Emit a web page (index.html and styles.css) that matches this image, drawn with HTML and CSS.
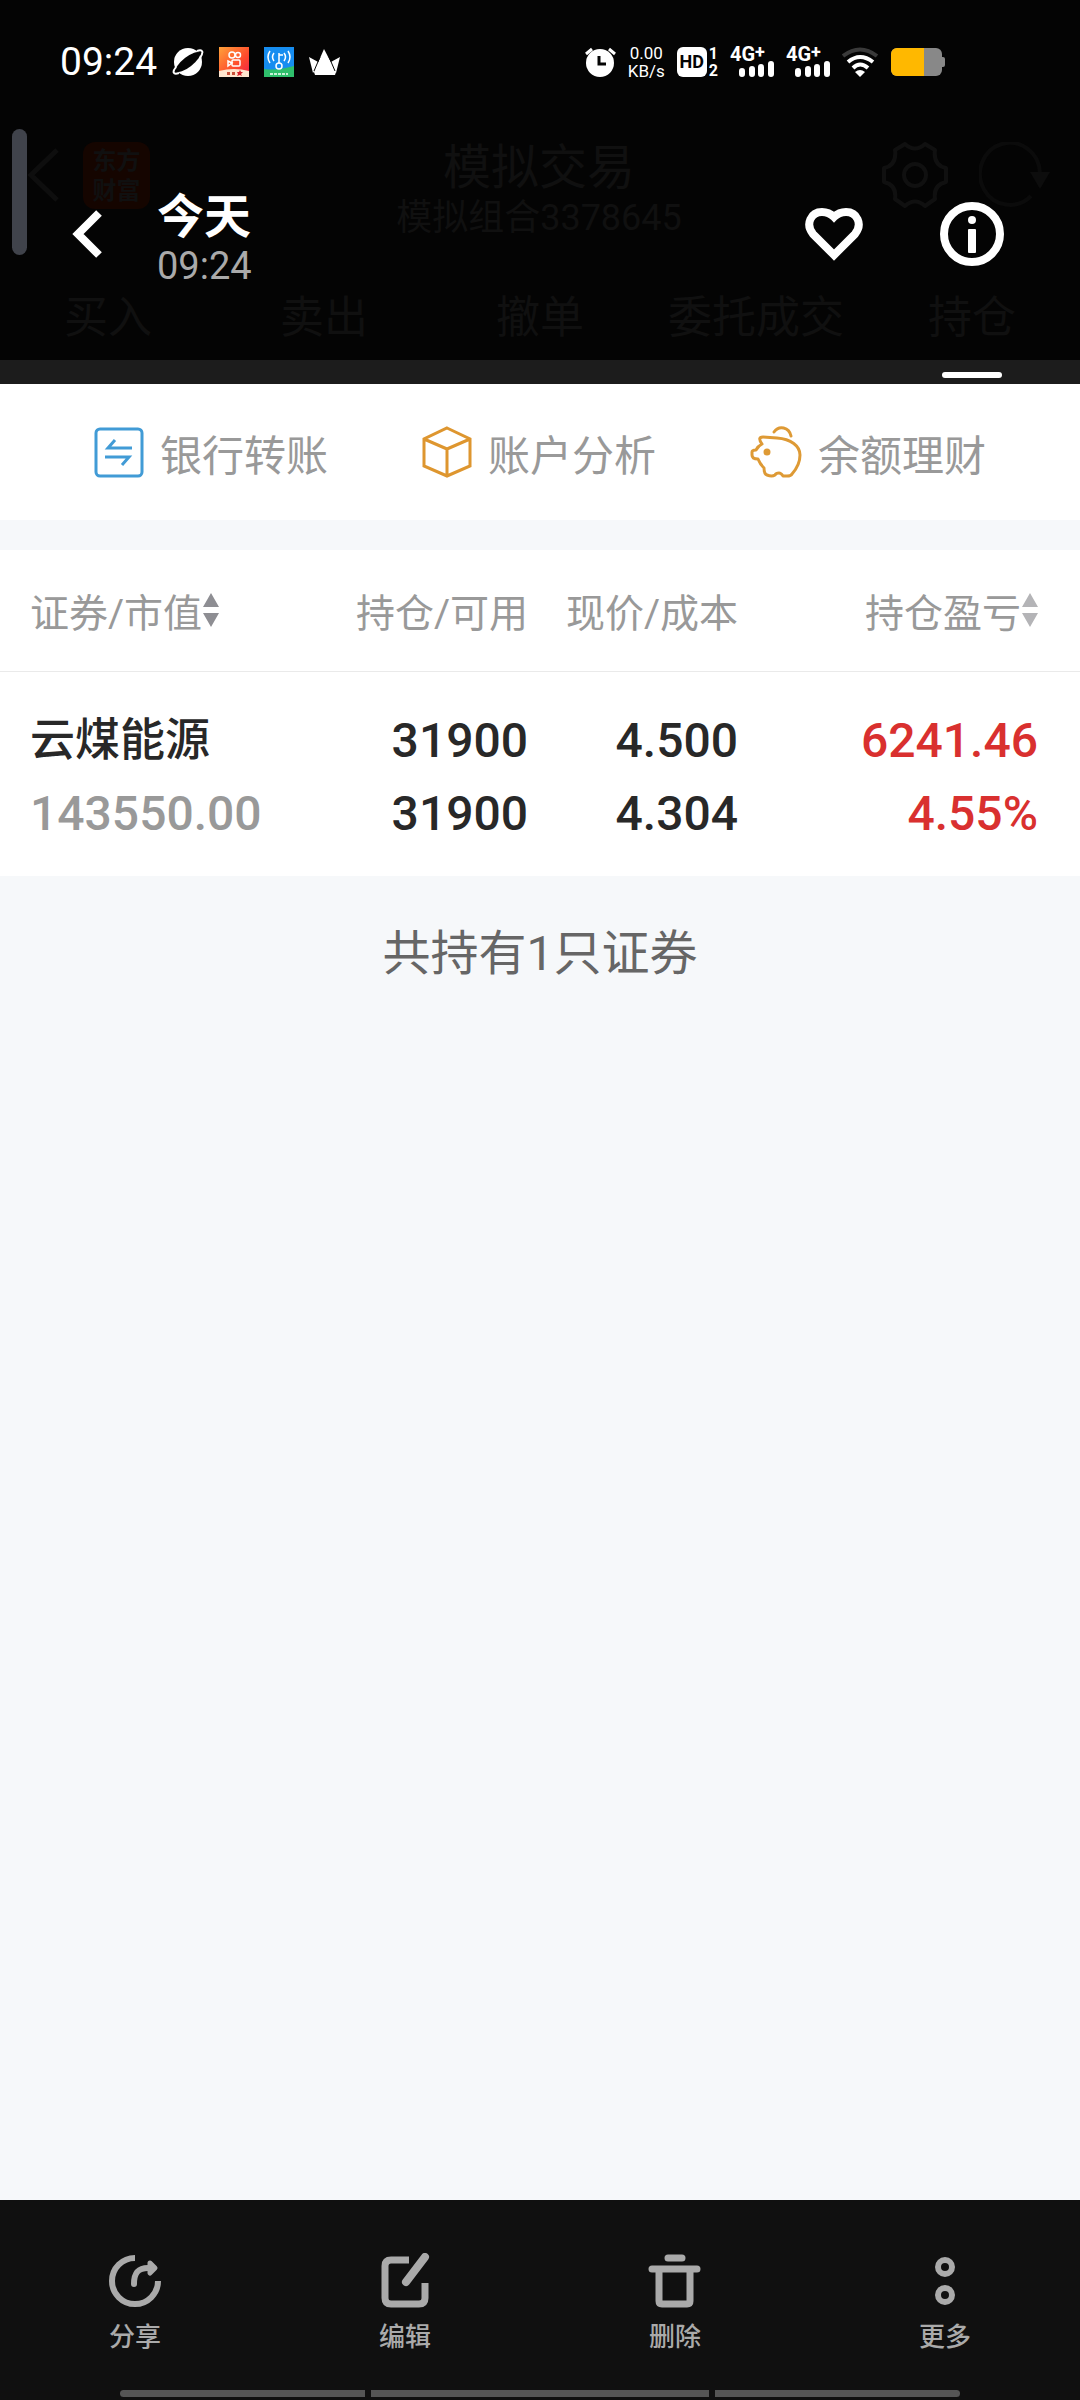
FILE: index.html
```html
<!DOCTYPE html>
<html lang="zh-CN">
<head>
    <meta charset="UTF-8">
    <meta name="viewport" content="width=device-width, initial-scale=1.0">
    <title>模拟交易 - 今天 09:24</title>
    <link rel="stylesheet" href="styles.css">
</head>

<body>
<header class="top">
    <!-- Status bar -->
    <div class="status-bar">
        <div class="status-left">
            <span class="clock">09:24</span>
            <svg width="32" height="30" viewBox="0 0 32 30">
                <circle cx="16" cy="15" r="14" fill="#fff"/>
                <ellipse cx="16" cy="15" rx="15" ry="5" transform="rotate(-38 16 15)" fill="#040404"/>
                <path d="M4 20C0 25 1 28 7 26M25 4C31 2 32 5 28 11" fill="none" stroke="#fff" stroke-width="2"/>
            </svg>
            <svg width="30" height="30" viewBox="0 0 30 30">
                <defs>
                    <linearGradient id="warm" x1="0" y1="0" x2="1" y2="1">
                        <stop offset="0" stop-color="#ffa23a"/>
                        <stop offset="0.6" stop-color="#ff4a2c"/>
                        <stop offset="1" stop-color="#f01f4a"/>
                    </linearGradient>
                </defs>
                <rect width="30" height="30" fill="url(#warm)"/>
                <path d="M0 24q15-4 30 0v6H0z" fill="#ffe6cf"/>
                <g fill="none" stroke="#fff" stroke-width="1.500">
                    <circle cx="13" cy="8" r="3"/>
                    <circle cx="19" cy="8" r="2.500"/>
                    <rect x="13" y="13" width="8" height="6" rx="1"/>
                    <path d="M13 16l-4-2v5z"/>
                </g>
                <path d="M8 25h3v3h-3zM13 25h3v3h-3z" fill="#c9523a"/>
                <path d="M21 23l1 2h2l-2 2 1 2-2-1-3 1 1-2-1-2h2z" fill="#d8202a"/>
            </svg>
            <svg width="30" height="30" viewBox="0 0 30 30">
                <rect width="30" height="30" fill="#168df0"/>
                <path d="M0 22q12 2 30-3v11H0z" fill="#2fbf6c"/>
                <g fill="none" stroke="#fff" stroke-width="1.500">
                    <path d="M6 4q-4 6 0 12M10 6q-3 4 0 8M24 4q4 6 0 12M20 6q3 4 0 8M15 6v10M15 8h4"/>
                    <circle cx="15" cy="19" r="3"/>
                </g>
                <path d="M6 27h18" stroke="#c9f2d8" stroke-width="2" stroke-dasharray="3 1"/>
            </svg>
            <svg width="31" height="26" viewBox="0 0 31 26">
                <path d="M4 24L0 8l11 6zM27 24l4-16-11 6z" fill="#fff"/>
                <path d="M15 0L5 23l1 3h20l1-3z" fill="#fff"/>
                <path d="M5 22L11 8M26 22L20 8" stroke="#040404" stroke-width="1"/>
            </svg>
        </div>
        <div class="status-right">
            <svg width="31" height="30" viewBox="0 0 31 30">
                <circle cx="15" cy="16" r="14" fill="#fff"/>
                <path d="M1 7l6-5M24 2l6 5" stroke="#fff" stroke-width="3"/>
                <path d="M14 9v8h7" fill="none" stroke="#040404" stroke-width="3"/>
            </svg>
            <div class="speed"><span>0.00</span><span>KB/s</span></div>
            <div class="volte">
                <span class="hd">HD</span>
                <span class="sims"><span>1</span><span>2</span></span>
            </div>
            <div class="signal">
                <span>4G<sup>+</sup></span>
                <svg width="35" height="16" viewBox="0 0 35 16"><path d="M3 10v3M13 8v5M22 6v7M32 3v10" stroke="#fff" stroke-width="6" stroke-linecap="round"/></svg>
            </div>
            <div class="signal">
                <span>4G<sup>+</sup></span>
                <svg width="35" height="16" viewBox="0 0 35 16"><path d="M3 10v3M13 8v5M22 6v7M32 3v10" stroke="#fff" stroke-width="6" stroke-linecap="round"/></svg>
            </div>
            <svg width="37" height="30" viewBox="0 0 37 30" fill="none" stroke="#fff" stroke-width="4">
                <path d="M1 9q17-13 34 0" stroke="#3a3a3a"/>
                <path d="M6 15q12-10 25 0M11 21q7-7 15 0"/>
                <path d="M13 25q5-4 10 0l-5 5z" fill="#fff" stroke="none"/>
            </svg>
            <svg width="54" height="28" viewBox="0 0 54 28">
                <rect x="49" y="9" width="5" height="10" rx="2" fill="#888"/>
                <rect width="51" height="28" rx="6" fill="#888"/>
                <path d="M6 0h27v28H6a6 6 0 0 1-6-6V6a6 6 0 0 1 6-6z" fill="#ffb800"/>
            </svg>
        </div>
    </div>

    <!-- Title bar of the trading app, dimmed under the viewer toolbar -->
    <div class="app-bar">
        <div class="app-left">
            <svg width="32" height="66" viewBox="0 0 32 66"><path d="M30 8L4 33l26 25" fill="none" stroke="#0e0e0e" stroke-width="5"/></svg>
            <span class="app-logo">东方<br>财富</span>
        </div>
        <div class="app-title">
            <h1>模拟交易</h1>
            <p>模拟组合3378645</p>
        </div>
        <div class="app-right">
            <svg width="66" height="66" viewBox="0 0 66 66" fill="none" stroke="#101010" stroke-width="4">
                <path d="M23 2Q33 11 43 2L53 8Q51 23 64 26V40Q51 43 53 57L43 64Q33 55 23 64L13 57Q15 43 2 40V26Q15 23 13 8Z" stroke-linejoin="round"/>
                <circle cx="33" cy="33" r="11"/>
            </svg>
            <svg width="72" height="66" viewBox="0 0 72 66">
                <path d="M52 54A30 31 0 1 1 61 31" fill="none" stroke="#0b0b0b" stroke-width="4"/>
                <path d="M51 30h20L61 47z" fill="#0d0d0d"/>
            </svg>
        </div>
    </div>
    <nav class="tabs">
        <a href="#">买入</a>
        <a href="#">卖出</a>
        <a href="#">撤单</a>
        <a href="#">委托成交</a>
        <a href="#">持仓</a>
    </nav>
    <div class="tab-line"><span></span></div>

    <!-- Viewer toolbar -->
    <div class="viewer-bar">
        <button type="button" aria-label="返回">
            <svg width="30" height="50" viewBox="0 0 30 50"><path d="M27 4L6 25l21 21" fill="none" stroke="#fff" stroke-width="8"/></svg>
        </button>
        <div class="viewer-title">
            <h2>今天</h2>
            <p>09:24</p>
        </div>
        <button type="button" aria-label="收藏">
            <svg width="58" height="64" viewBox="0 0 58 64"><path d="M29 53L8 32C0 22 6 10 17 10q7 0 12 5q5-5 12-5C52 10 58 22 50 32z" fill="none" stroke="#fff" stroke-width="8"/></svg>
        </button>
        <button type="button" aria-label="详情">
            <svg width="64" height="64" viewBox="0 0 64 64">
                <circle cx="32" cy="32" r="28" fill="none" stroke="#fff" stroke-width="8"/>
                <circle cx="32" cy="18" r="4" fill="#fff"/>
                <rect x="28" y="27" width="8" height="24" rx="1" fill="#fff"/>
            </svg>
        </button>
    </div>
    <span class="edge-handle"></span>
</header>

<main>
    <nav class="shortcuts">
        <a href="#">
            <svg width="50" height="52" viewBox="0 0 50 52" fill="none" stroke="#419bd6" stroke-width="3">
                <rect x="2" y="3" width="46" height="47" rx="4"/>
                <path d="M38 22H14l7-8M11 31h24l-7 8"/>
            </svg>
            银行转账
        </a>
        <a href="#">
            <svg width="50" height="52" viewBox="0 0 50 52" fill="none" stroke="#de962f" stroke-width="3">
                <path d="M25 2l23 11v27L25 50 2 40V13zM2 13l23 10 23-10M25 23v27"/>
            </svg>
            账户分析
        </a>
        <a href="#">
            <svg width="52" height="52" viewBox="0 0 52 52" fill="none" stroke="#de9a35" stroke-width="3" stroke-linejoin="round" stroke-linecap="round">
                <path d="M12 18Q7 11 13 11L27 12C41 13 50 20 50 29Q50 39 42 48Q41 50 37 50H33Q31 47 29 47Q26 47 25 49Q22 51 17 49Q14 48 14 42Q10 38 8 33Q2 33 2 29V26Q2 24 6 24Q8 20 12 18Z"/>
                <path d="M24 6C29-1 39 1 41 10"/>
                <circle cx="17" cy="26" r="2" fill="#de9a35"/>
            </svg>
            余额理财
        </a>
    </nav>

    <table class="holdings">
        <colgroup>
            <col>
            <col class="col-amount">
            <col class="col-price">
            <col class="col-profit">
        </colgroup>
        <thead>
            <tr>
                <th>
                    <button type="button">证券/市值<svg width="16" height="34" viewBox="0 0 16 34" fill="#8e8e93"><path d="M8 0l8 14H0zM8 34l8-14H0z"/></svg></button>
                </th>
                <th>持仓/可用</th>
                <th>现价/成本</th>
                <th>
                    <button type="button">持仓盈亏<svg width="16" height="34" viewBox="0 0 16 34" fill="#b4b4b7"><path d="M8 0l8 14H0zM8 34l8-14H0z"/></svg></button>
                </th>
            </tr>
        </thead>
        <tbody>
            <tr>
                <td><span class="stock-name">云煤能源</span><span class="muted">143550.00</span></td>
                <td><span>31900</span><span>31900</span></td>
                <td><span>4.500</span><span>4.304</span></td>
                <td class="up"><span>6241.46</span><span>4.55%</span></td>
            </tr>
        </tbody>
    </table>

    <p class="summary">共持有1只证券</p>
</main>

<footer>
    <div class="actions">
        <button type="button">
            <svg width="54" height="56" viewBox="0 0 54 56" fill="none" stroke="#aaa" stroke-width="6">
                <path d="M27 5A23 23 0 1 0 50 28"/>
                <path d="M26 31C26 20 30 15 40 15" stroke-linecap="round"/>
                <path d="M42 10l5 5-5 5z" fill="#aaa" stroke-linejoin="round" stroke-width="5"/>
            </svg>
            分享
        </button>
        <button type="button">
            <svg width="54" height="56" viewBox="0 0 54 56" fill="none" stroke="#aaa" stroke-width="7">
                <path d="M31 7H13q-6 0-6 6v32q0 6 6 6h28q6 0 6-6V30"/>
                <path d="M28 29L47 4" stroke-width="8" stroke-linecap="round"/>
            </svg>
            编辑
        </button>
        <button type="button">
            <svg width="54" height="56" viewBox="0 0 54 56" fill="none" stroke="#aaa" stroke-width="7">
                <path d="M20 5h14M4 16h45" stroke-linecap="round"/>
                <path d="M11 16v32q0 3 3 3h25q3 0 3-3V16"/>
            </svg>
            删除
        </button>
        <button type="button">
            <svg width="54" height="56" viewBox="0 0 54 56" fill="none" stroke="#aaa" stroke-width="6">
                <circle cx="27" cy="14" r="7"/>
                <circle cx="27" cy="42" r="7"/>
            </svg>
            更多
        </button>
    </div>
    <div class="gesture-bar"><span></span><span class="wide"></span><span></span></div>
</footer>
</body>
</html>
```

FILE: styles.css
```css
* {
    box-sizing: border-box;
}

body {
    margin: 0;
    min-height: 100vh;
    display: flex;
    flex-direction: column;
    font-family: Roboto, "Noto Sans CJK SC", sans-serif;
    background-color: #f6f8fa;
}

h1, h2, p {
    margin: 0;
    font-weight: 400;
}

a {
    color: inherit;
    text-decoration: none;
}

button {
    padding: 0;
    border: none;
    background: none;
    color: inherit;
    font: inherit;
    cursor: pointer;
}

svg {
    display: block;
    flex: none;
}

/* Top area */
.top {
    position: relative;
    background-color: #040404;
    color: #101010;
}

.status-bar {
    display: flex;
    justify-content: space-between;
    align-items: center;
    height: 124px;
    padding: 0 135px 0 60px;
    color: white;
}

.status-left {
    display: flex;
    align-items: center;
    gap: 15px;
}

.status-right {
    display: flex;
    align-items: center;
    gap: 12px;
}

.clock {
    font-size: 39px;
    line-height: 40px;
}

.speed {
    display: flex;
    flex-direction: column;
    align-items: center;
    font-size: 17px;
    line-height: 18px;
}

.volte {
    display: flex;
    align-items: center;
    gap: 2px;
}

.hd {
    width: 30px;
    height: 30px;
    border-radius: 6px;
    background-color: white;
    color: #040404;
    font-size: 18px;
    font-weight: 700;
    line-height: 30px;
    text-align: center;
}

.sims {
    display: flex;
    flex-direction: column;
    font-size: 16px;
    font-weight: 700;
    line-height: 17px;
}

.signal {
    display: flex;
    flex-direction: column;
    width: 44px;
    font-size: 20px;
    font-weight: 700;
    line-height: 14px;
}

.signal sup {
    font-size: 18px;
    line-height: 0;
    vertical-align: 3px;
}

.signal svg {
    align-self: flex-end;
}

.app-bar {
    display: grid;
    grid-template-columns: 1fr auto 1fr;
    height: 146px;
    padding: 18px 29px 0 27px;
}

.app-left {
    display: flex;
    gap: 24px;
}

.app-logo {
    width: 67px;
    height: 67px;
    padding-top: 4px;
    border-radius: 12px;
    background-color: #150500;
    font-size: 24px;
    font-weight: 700;
    line-height: 30px;
    text-align: center;
}

.app-title {
    text-align: center;
}

.app-title h1 {
    font-size: 48px;
    line-height: 52px;
}

.app-title p {
    font-size: 36px;
    line-height: 48px;
}

.app-right {
    display: flex;
    justify-content: flex-end;
    gap: 31px;
}

.tabs {
    display: grid;
    grid-template-columns: repeat(5, 1fr);
    height: 90px;
    font-size: 44px;
    line-height: 96px;
    text-align: center;
}

.tab-line {
    display: grid;
    grid-template-columns: repeat(5, 1fr);
    align-items: center;
    height: 24px;
    padding-top: 6px;
    background-color: #1c1c1c;
}

.tab-line span {
    grid-column: 5;
    justify-self: center;
    width: 60px;
    height: 6px;
    border-radius: 3px;
    background-color: white;
}

.viewer-bar {
    position: absolute;
    top: 184px;
    left: 0;
    right: 0;
    display: flex;
    align-items: center;
    height: 100px;
    padding: 0 76px 0 72px;
    gap: 77px;
    color: white;
}

.viewer-title {
    flex: 1;
    margin-left: -22px;
}

.viewer-title h2 {
    padding-top: 4px;
    font-size: 47px;
    font-weight: 700;
    line-height: 60px;
}

.viewer-title p {
    color: #aaa;
    font-size: 38px;
    line-height: 38px;
}

.edge-handle {
    position: absolute;
    top: 129px;
    left: 12px;
    width: 15px;
    height: 126px;
    border-radius: 8px;
    background-color: #40434b;
}

/* Content */
main {
    flex: 1;
}

.shortcuts {
    display: flex;
    justify-content: space-evenly;
    height: 136px;
    margin-bottom: 30px;
    background-color: white;
    color: #999;
    font-size: 42px;
}

.shortcuts a {
    display: flex;
    align-items: center;
    gap: 16px;
}

.holdings {
    width: 100%;
    border-collapse: collapse;
    table-layout: fixed;
    background-color: white;
    color: #282828;
}

.col-amount {
    width: 204px;
}

.col-price {
    width: 210px;
}

.col-profit {
    width: 342px;
}

.holdings th {
    height: 121px;
    padding: 0;
    border-bottom: 1px solid #eaeaea;
    color: #999;
    font-size: 39px;
    font-weight: 400;
    text-align: right;
}

.holdings th button {
    display: inline-flex;
    align-items: center;
    gap: 1px;
}

.holdings td {
    padding: 32px 0 26px;
    font-size: 48px;
    font-weight: 500;
    line-height: 73px;
    text-align: right;
}

.holdings td span {
    display: block;
    height: 73px;
}

.holdings th:first-child,
.holdings td:first-child {
    padding-left: 30px;
    text-align: left;
}

.holdings th:last-child,
.holdings td:last-child {
    padding-right: 42px;
}

.holdings .stock-name {
    font-size: 45px;
}

.muted {
    color: #999;
}

.up {
    color: #d9302f;
}

.summary {
    padding-top: 42px;
    color: #666;
    font-size: 48px;
    line-height: 72px;
    text-align: center;
}

/* Bottom bar */
footer {
    background-color: #101010;
}

.actions {
    display: grid;
    grid-template-columns: repeat(4, 1fr);
    height: 190px;
    padding-top: 53px;
    color: #aaa;
    font-size: 26px;
    font-weight: 500;
}

.actions button {
    display: flex;
    flex-direction: column;
    align-items: center;
    gap: 8px;
    line-height: 40px;
}

.gesture-bar {
    display: flex;
    gap: 6px;
    height: 10px;
    padding: 0 120px 3px;
}

.gesture-bar span {
    flex: 245;
    background-color: #555;
}

.gesture-bar .wide {
    flex: 338;
}

.gesture-bar span:first-child {
    border-radius: 4px 0 0 4px;
}

.gesture-bar span:last-child {
    border-radius: 0 4px 4px 0;
}
```
